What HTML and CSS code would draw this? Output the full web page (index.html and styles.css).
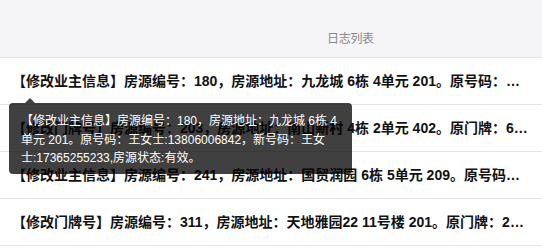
FILE: index.html
```html
<!DOCTYPE html>
<html lang="zh-CN">
<head>
<meta charset="utf-8">
<link rel="stylesheet" href="styles.css">
</head>
<body>
<div class="page">
  <div class="header"><span class="title">日志列表</span></div>
  <div class="list">
    <div class="row">【修改业主信息】房源编号：180，房源地址：九龙城 6栋 4单元 201。原号码：王女士:13806006842，新号码：王女士:17365255233,房源状态:有效。</div>
    <div class="row">【修改门牌号】房源编号：203，房源地址：南山新村 4栋 2单元 402。原门牌：602，新门牌：603。</div>
    <div class="row">【修改业主信息】房源编号：241，房源地址：国贸润园 6栋 5单元 209。原号码：李先生:13906001234，新号码：李先生:13906005678。</div>
    <div class="row">【修改门牌号】房源编号：311，房源地址：天地雅园22 11号楼 201。原门牌：201，新门牌：202。</div>
  </div>
  <div class="tooltip">
    <span class="arrow"></span>
    【修改业主信息】房源编号：180，房源地址：九龙城 6栋 4单元 201。原号码：王女士:13806006842，新号码：王女士:17365255233,房源状态:有效。
  </div>
</div>
</body>
</html>
```
FILE: styles.css
```css
html, body {
  margin: 0;
  padding: 0;
  background: #ffffff;
}
body {
  font-family: "Liberation Sans", "Noto Sans CJK SC", sans-serif;
  width: 542px;
  height: 248px;
  overflow: hidden;
}
.page {
  position: relative;
}
.header {
  height: 58px;
  box-sizing: border-box;
  background: #f5f5f7;
  border-bottom: 1px solid #e4e4e6;
  padding: 29px 0 0 327px;
}
.title {
  font-size: 12px;
  line-height: 18px;
  color: #8a8a8a;
  letter-spacing: -0.3px;
}
.row {
  height: 46px;
  line-height: 46px;
  border-bottom: 1px solid #e4e4e4;
  padding: 0 14px 0 12px;
  font-size: 14px;
  font-weight: bold;
  color: #111111;
  white-space: nowrap;
  overflow: hidden;
  text-overflow: ellipsis;
}
.tooltip {
  position: absolute;
  left: 9px;
  top: 103px;
  width: 343px;
  box-sizing: border-box;
  padding: 9px 8px 6px 12px;
  background: rgba(0, 0, 0, 0.75);
  color: #ffffff;
  font-size: 12px;
  line-height: 18.5px;
  border-radius: 4px;
}
.arrow {
  position: absolute;
  left: 16px;
  top: -5px;
  width: 0;
  height: 0;
  border-left: 5px solid transparent;
  border-right: 5px solid transparent;
  border-bottom: 5px solid rgba(0, 0, 0, 0.75);
}
```
